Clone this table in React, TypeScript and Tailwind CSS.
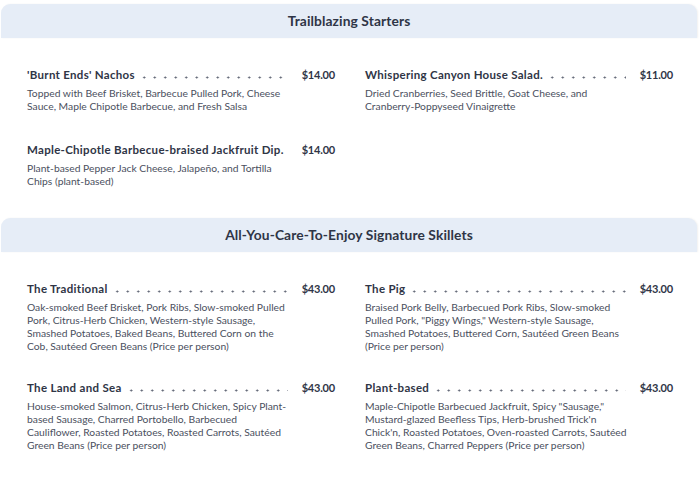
import React from "react";

type Item = {
	name: string;
	price: string;
	lines: string[];
};

const starters: (Item | null)[] = [
	{
		name: "'Burnt Ends' Nachos",
		price: "$14.00",
		lines: [
			"Topped with Beef Brisket, Barbecue Pulled Pork, Cheese",
			"Sauce, Maple Chipotle Barbecue, and Fresh Salsa",
		],
	},
	{
		name: "Whispering Canyon House Salad.",
		price: "$11.00",
		lines: [
			"Dried Cranberries, Seed Brittle, Goat Cheese, and",
			"Cranberry-Poppyseed Vinaigrette",
		],
	},
	{
		name: "Maple-Chipotle Barbecue-braised Jackfruit Dip.",
		price: "$14.00",
		lines: [
			"Plant-based Pepper Jack Cheese, Jalapeño, and Tortilla",
			"Chips (plant-based)",
		],
	},
	null,
];

const skillets: Item[] = [
	{
		name: "The Traditional",
		price: "$43.00",
		lines: [
			"Oak-smoked Beef Brisket, Pork Ribs, Slow-smoked Pulled",
			"Pork, Citrus-Herb Chicken, Western-style Sausage,",
			"Smashed Potatoes, Baked Beans, Buttered Corn on the",
			"Cob, Sautéed Green Beans (Price per person)",
		],
	},
	{
		name: "The Pig",
		price: "$43.00",
		lines: [
			"Braised Pork Belly, Barbecued Pork Ribs, Slow-smoked",
			'Pulled Pork, "Piggy Wings," Western-style Sausage,',
			"Smashed Potatoes, Buttered Corn, Sautéed Green Beans",
			"(Price per person)",
		],
	},
	{
		name: "The Land and Sea",
		price: "$43.00",
		lines: [
			"House-smoked Salmon, Citrus-Herb Chicken, Spicy Plant-",
			"based Sausage, Charred Portobello, Barbecued",
			"Cauliflower, Roasted Potatoes, Roasted Carrots, Sautéed",
			"Green Beans (Price per person)",
		],
	},
	{
		name: "Plant-based",
		price: "$43.00",
		lines: [
			'Maple-Chipotle Barbecued Jackfruit, Spicy "Sausage,"',
			"Mustard-glazed Beefless Tips, Herb-brushed Trick'n",
			"Chick'n, Roasted Potatoes, Oven-roasted Carrots, Sautéed",
			"Green Beans, Charred Peppers (Price per person)",
		],
	},
];

function MenuItem({ item }: { item: Item }) {
	return (
		<div>
			<div className="flex items-end text-[11.5px] leading-[16px] font-bold text-[#2f3546] tracking-[0.3px]">
				<span className="whitespace-nowrap">{item.name}</span>
				{/* dot leader */}
				<span className="flex-1 min-w-0 ml-[4px] mb-[4px] h-[3px] bg-[radial-gradient(circle,#5a6070_0.85px,transparent_1.2px)] bg-[length:10.5px_3px] bg-repeat-x bg-left" />
				<span className="ml-[14px] whitespace-nowrap text-[11px] tracking-[-0.2px]">
					{item.price}
				</span>
			</div>
			<p className="mt-[4px] text-[10.3px] leading-[13px] text-[#4b5060]">
				{item.lines.map((line, i) => (
					<React.Fragment key={i}>
						{line}
						{i < item.lines.length - 1 && <br />}
					</React.Fragment>
				))}
			</p>
		</div>
	);
}

function SectionHeader({ title }: { title: string }) {
	return (
		<div className="mx-[1px] mr-[3px] h-[34px] rounded-t-[9px] bg-[#e6edf7] shadow-[1px_0_2px_rgba(0,0,0,0.06)] flex items-center justify-center">
			<h2 className="text-[13.8px] font-bold text-[#2f3546] tracking-[0.1px]">
				{title}
			</h2>
		</div>
	);
}

export default function App() {
	return (
		<div
			className="w-[700px] h-[479px] bg-white overflow-hidden pt-[4px]"
			style={{ fontFamily: "Lato, 'Noto Sans', sans-serif" }}
		>
			<SectionHeader title="Trailblazing Starters" />
			<div className="grid grid-cols-2 gap-x-[30px] gap-y-[29px] px-[27px] pt-[29px]">
				{starters.map((item, i) =>
					item ? <MenuItem key={i} item={item} /> : <div key={i} />
				)}
			</div>

			<div className="mt-[30px]">
				<SectionHeader title="All-You-Care-To-Enjoy Signature Skillets" />
			</div>
			<div className="grid grid-cols-2 gap-x-[30px] gap-y-[27px] px-[27px] pt-[29px]">
				{skillets.map((item, i) => (
					<MenuItem key={i} item={item} />
				))}
			</div>
		</div>
	);
}
